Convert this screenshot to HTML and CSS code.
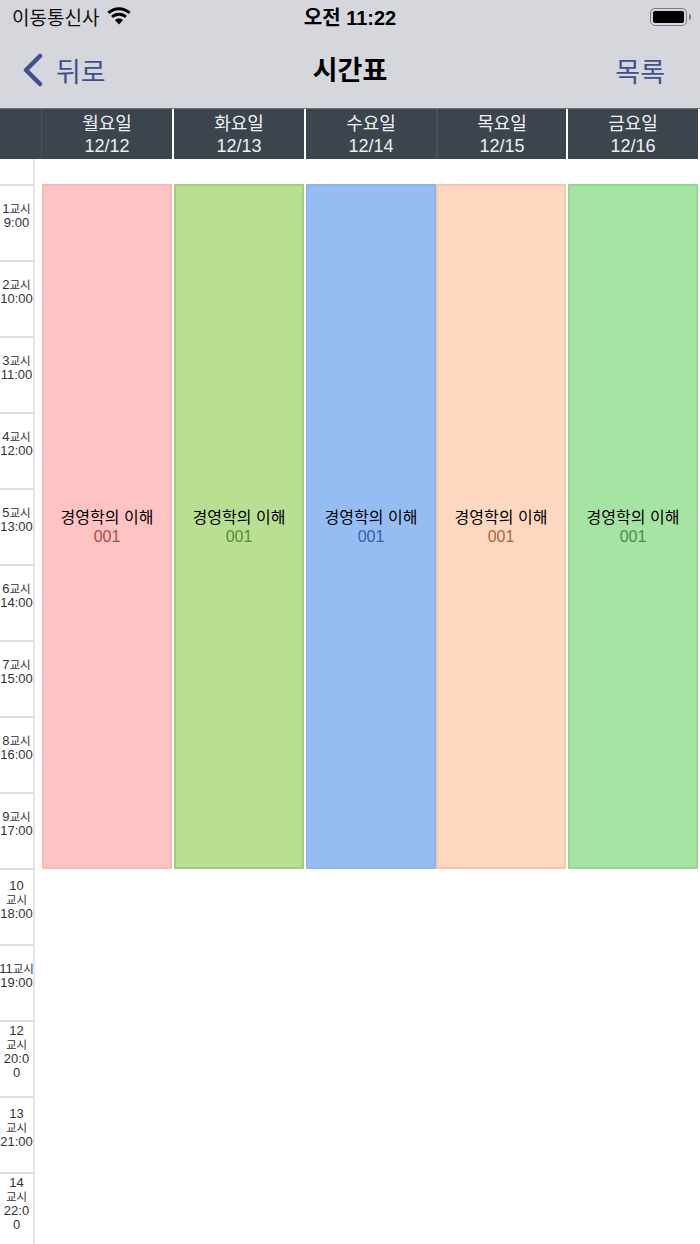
FILE: index.html
```html
<!DOCTYPE html>
<html lang="ko">
<head>
<meta charset="utf-8">
<title>시간표</title>
<link rel="stylesheet" href="styles.css">
</head>
<body>
<div class="top">
  <div class="status">
    <div class="status-left">
      <span>이동통신사</span>
      <svg class="wifi" viewBox="0 0 26 19"><path d="M13 3.200c3.700 0 7 1.400 9.600 3.800l2-2.200C21.400 1.900 17.400.2 13 .2S4.600 1.900 1.400 4.800l2 2.200C6 4.600 9.300 3.200 13 3.200z"/><path d="M13 8.800c2.300 0 4.300.9 5.900 2.300l2-2.200C18.700 6.900 16 5.800 13 5.800S7.300 6.900 5.100 8.900l2 2.200C8.700 9.700 10.700 8.800 13 8.800z"/><path d="M13 11.400c-1.600 0-3 .6-4.100 1.600l4.100 4.600 4.100-4.600c-1.100-1-2.500-1.600-4.100-1.600z"/></svg>
    </div>
    <div class="clock">오전 11:22</div>
    <div class="battery"><span class="battery-body"><span class="battery-fill"></span></span><span class="battery-cap"></span></div>
  </div>
  <div class="nav">
    <div class="nav-back">
      <svg class="chevron" viewBox="0 0 22 34"><path d="M18 3 L4 17 L18 31"/></svg>
      <span>뒤로</span>
    </div>
    <div class="nav-title">시간표</div>
    <div class="nav-list">목록</div>
  </div>
</div>
<div class="days">
  <div class="corner"></div>
  <div class="day sep"><span>월요일</span><span>12/12</span></div>
  <div class="day sep"><span>화요일</span><span>12/13</span></div>
  <div class="day"><span>수요일</span><span>12/14</span></div>
  <div class="day faint sep"><span>목요일</span><span>12/15</span></div>
  <div class="day sep"><span>금요일</span><span>12/16</span></div>
</div>
<div class="board">
  <div class="times">
    <div class="time-spacer"></div>
    <div class="time"><p class="label">1<span class="unit">교시</span><br>9:00</p></div>
    <div class="time"><p class="label">2<span class="unit">교시</span><br>10:00</p></div>
    <div class="time"><p class="label">3<span class="unit">교시</span><br>11:00</p></div>
    <div class="time"><p class="label">4<span class="unit">교시</span><br>12:00</p></div>
    <div class="time"><p class="label">5<span class="unit">교시</span><br>13:00</p></div>
    <div class="time"><p class="label">6<span class="unit">교시</span><br>14:00</p></div>
    <div class="time"><p class="label">7<span class="unit">교시</span><br>15:00</p></div>
    <div class="time"><p class="label">8<span class="unit">교시</span><br>16:00</p></div>
    <div class="time"><p class="label">9<span class="unit">교시</span><br>17:00</p></div>
    <div class="time"><p class="label">10<br><span class="unit">교시</span><br>18:00</p></div>
    <div class="time"><p class="label">11<span class="unit">교시</span><br>19:00</p></div>
    <div class="time"><p class="label">12<br><span class="unit">교시</span><br>20:0<br>0</p></div>
    <div class="time"><p class="label">13<br><span class="unit">교시</span><br>21:00</p></div>
    <div class="time"><p class="label">14<br><span class="unit">교시</span><br>22:0<br>0</p></div>
  </div>
  <div class="classes">
    <div class="class pink"><span class="name">경영학의 이해</span><span class="code">001</span></div>
    <div class="class lime"><span class="name">경영학의 이해</span><span class="code">001</span></div>
    <div class="class blue"><span class="name">경영학의 이해</span><span class="code">001</span></div>
    <div class="class peach"><span class="name">경영학의 이해</span><span class="code">001</span></div>
    <div class="class green"><span class="name">경영학의 이해</span><span class="code">001</span></div>
  </div>
</div>
</body>
</html>
```
FILE: styles.css
```css
* { box-sizing: border-box; }
html, body { margin: 0; padding: 0; }
body {
  width: 700px;
  height: 1244px;
  overflow: hidden;
  background: #fff;
  font-family: "Liberation Sans", "Noto Sans CJK KR", sans-serif;
  color: #000;
}
.top { background: #d6d7dc; height: 108px; }
.status {
  height: 36px;
  display: flex;
  align-items: center;
  justify-content: space-between;
  padding: 0 9px 3px 12px;
  position: relative;
  font-size: 19px;
}
.status-left { display: flex; align-items: center; gap: 7px; color: #111; }
.wifi { width: 26px; height: 19px; fill: #000; }
.clock { position: absolute; left: 0; right: 0; text-align: center; font-size: 20px; font-weight: 700; }
.battery { display: flex; align-items: center; gap: 2px; }
.battery-body {
  width: 37px; height: 18px; border: 1.5px solid #7d7d80; border-radius: 5px; padding: 2px; display: block;
}
.battery-fill { display: block; width: 100%; height: 100%; background: #000; border-radius: 2px; }
.battery-cap { width: 2px; height: 6px; background: #7d7d80; border-radius: 0 2px 2px 0; }
.nav {
  height: 72px;
  display: flex;
  align-items: center;
  justify-content: space-between;
  padding: 0 35px 4px 22px;
  position: relative;
  font-size: 27px;
  color: #41518c;
}
.nav-back { display: flex; align-items: center; gap: 12px; }
.chevron { width: 22px; height: 34px; fill: none; stroke: #41518c; stroke-width: 4.5; stroke-linecap: round; stroke-linejoin: round; }
.nav-title { position: absolute; left: 0; right: 0; text-align: center; color: #000; font-weight: 700; font-size: 27px; padding-bottom: 4px; }
.days {
  height: 51px;
  display: grid;
  grid-template-columns: 42px 132px 132px 130px 132px 132px;
  background: #3c444e;
  border-top: 1px solid #6d737b;
}
.corner { border-right: 1px solid #4b525c; }
.day {
  display: flex;
  flex-direction: column;
  align-items: center;
  justify-content: center;
  color: #eef0f2;
  font-size: 18px;
  line-height: 22px;
  padding-top: 1px;
}
.sep { border-right: 2px solid #fff; }
.faint { border-left: 2px solid #4b525c; }
.board { display: flex; height: 1085px; }
.times { width: 35px; flex: none; border-right: 2px solid #e6e6e6; }
.time-spacer { height: 25px; }
.time {
  height: 76px;
  width: 33px;
  border-top: 2px solid #dcdcdc;
  padding-bottom: 14px;
  display: flex;
  align-items: center;
  justify-content: center;
  text-align: center;
  font-size: 13px;
  line-height: 14px;
  color: #333;
  white-space: nowrap;
}
.label { margin: 0; }
.unit { font-size: 11.5px; }
.classes {
  margin: 25px 0 0 7px;
  height: 685px;
  display: flex;
  gap: 2px;
}
.class {
  width: 130px;
  display: flex;
  flex-direction: column;
  align-items: center;
  justify-content: center;
  padding-top: 1px;
  border: 2px solid;
  font-size: 16px;
  line-height: 20px;
}
.code { font-size: 16px; line-height: 18px; }
.pink { background: #fec3c3; border-color: #fdb7b7; }
.pink .code { color: #b4484c; }
.lime { background: #b9df92; border-color: #a3cc7c; }
.lime .code { color: #5a9030; }
.blue { background: #95bdf4; border-color: #8fb4ec; }
.blue .code { color: #3a60a8; }
.peach { background: #fed7c0; border-color: #f8c8ae; margin-left: -2px; }
.peach .code { color: #b3643c; }
.green { background: #a6e4a3; border-color: #95d892; }
.green .code { color: #45904a; }
```
